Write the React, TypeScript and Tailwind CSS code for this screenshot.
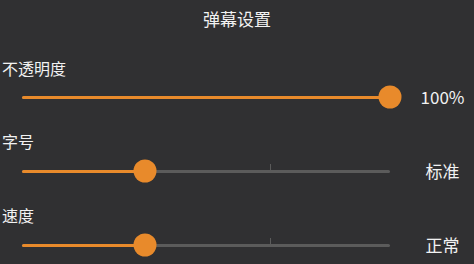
const font = { fontFamily: '"Noto Sans CJK SC", "Noto Sans", sans-serif' };

type SliderProps = {
  label: string;
  value: string;
  percent: number;
  ticks?: number[];
  first?: boolean;
};

function SettingSlider({ label, value, percent, ticks = [], first }: SliderProps) {
  return (
    <div className={first ? "mt-[20px]" : "mt-[24px]"}>
      <div className="h-[20px] pl-[2px] text-[16px] leading-[20px] text-[#f2f2f2]">{label}</div>
      <div className={`flex h-[20px] items-center ${first ? "mt-[9px]" : "mt-[10px]"}`}>
        <div className="relative ml-[22px] h-[3px] w-[368px] rounded-full bg-[#5b5b5b]">
          <div className="absolute left-0 top-0 h-[3px] rounded-full bg-[#e88a2b]" style={{ width: `${percent}%` }} />
          {ticks.map((t) => (
            <div key={t} className="absolute bottom-0 h-[9px] w-[1px] bg-[#5b5b5b]" style={{ left: `${t}%` }} />
          ))}
          <div
            className="absolute top-1/2 h-[23px] w-[23px] -translate-x-1/2 -translate-y-1/2 rounded-full bg-[#e88a2b]"
            style={{ left: `${percent}%` }}
          />
        </div>
        <div className="ml-[21px] w-[63px] text-center text-[17px] leading-[20px] text-[#f2f2f2]">{value}</div>
      </div>
    </div>
  );
}

export default function App() {
  return (
    <div className="h-[264px] w-[474px] overflow-hidden bg-[#303032]" style={font}>
      <div className="flex h-[38px] items-center justify-center text-[17px] text-[#f2f2f2]">弹幕设置</div>
      <SettingSlider first label="不透明度" value="100%" percent={100} />
      <SettingSlider label="字号" value="标准" percent={33.5} ticks={[67.4]} />
      <SettingSlider label="速度" value="正常" percent={33.5} ticks={[67.4]} />
    </div>
  );
}
